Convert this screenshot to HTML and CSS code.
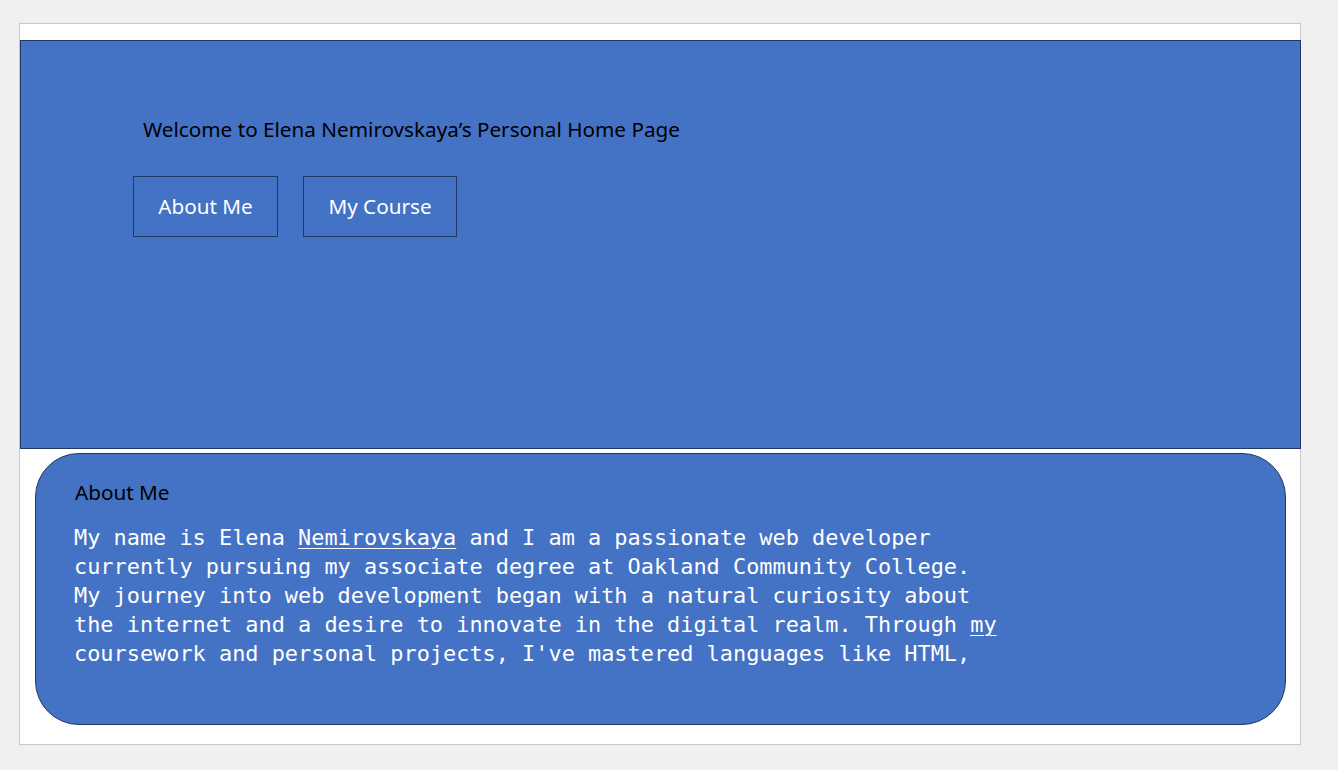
FILE: index.html
```html
<!DOCTYPE html>
<html lang="en">
<head>
<meta charset="utf-8">
<title>Elena Nemirovskaya</title>
<link rel="stylesheet" href="styles.css">
</head>
<body>
<div class="slide">
  <header class="hero">
    <h1 class="hero-title">Welcome to Elena Nemirovskaya’s Personal Home Page</h1>
    <nav class="nav">
      <a class="nav-btn nav-btn-about" href="#about">About Me</a>
      <a class="nav-btn nav-btn-course" href="#course">My Course</a>
    </nav>
  </header>
  <section class="about" id="about">
    <h2 class="about-title">About Me</h2>
    <p class="about-text">My name is Elena <span class="ul">Nemirovskaya</span> and I am a passionate web developer<br>currently pursuing my associate degree at Oakland Community College.<br>My journey into web development began with a natural curiosity about<br>the internet and a desire to innovate in the digital realm. Through <span class="ul">my</span><br>coursework and personal projects, I've mastered languages like HTML,</p>
  </section>
</div>
</body>
</html>
```

FILE: styles.css
```css
html, body {
  margin: 0;
  padding: 0;
}
body {
  background: #f0f0f0;
  width: 1338px;
  height: 770px;
  overflow: hidden;
}
.slide {
  box-sizing: border-box;
  margin: 23px 0 0 19px;
  width: 1282px;
  height: 722px;
  border: 1px solid #c8c8c8;
  background: #ffffff;
  padding-top: 16px;
}
.hero {
  box-sizing: border-box;
  width: 1281px;
  height: 409px;
  background: #4472c4;
  border: 1px solid #1f3864;
  padding: 74px 0 0 122px;
}
.hero-title {
  margin: 0;
  font-family: "Noto Sans", "Open Sans", sans-serif;
  font-weight: 400;
  font-size: 20.7px;
  line-height: 28px;
  color: #000000;
}
.nav {
  display: flex;
  gap: 25px;
  margin-top: 33px;
  margin-left: -10px;
}
.nav-btn {
  box-sizing: border-box;
  height: 61px;
  display: flex;
  align-items: center;
  justify-content: center;
  border: 1px solid #1f3864;
  color: #ffffff;
  text-decoration: none;
  font-family: "Noto Sans", "Open Sans", sans-serif;
  font-size: 20.7px;
  line-height: 28px;
  padding-bottom: 2px;
}
.nav-btn-about {
  width: 145px;
}
.nav-btn-course {
  width: 154px;
}
.about {
  box-sizing: border-box;
  margin: 4px 0 0 15px;
  width: 1251px;
  height: 272px;
  background: #4472c4;
  border: 1px solid #1f3864;
  border-radius: 44px;
  padding: 24px 0 0 38px;
  overflow: hidden;
}
.about-title {
  margin: 0 0 0 1px;
  font-family: "Noto Sans", "Open Sans", sans-serif;
  font-weight: 400;
  font-size: 20.7px;
  line-height: 28px;
  color: #000000;
}
.about-text {
  margin: 17px 0 0 0;
  font-family: "DejaVu Sans Mono", "Liberation Mono", monospace;
  font-size: 21.9px;
  line-height: 29px;
  color: #ffffff;
  white-space: nowrap;
}
.ul {
  text-decoration: underline;
  text-underline-offset: 3px;
  text-decoration-thickness: 1px;
}
```
